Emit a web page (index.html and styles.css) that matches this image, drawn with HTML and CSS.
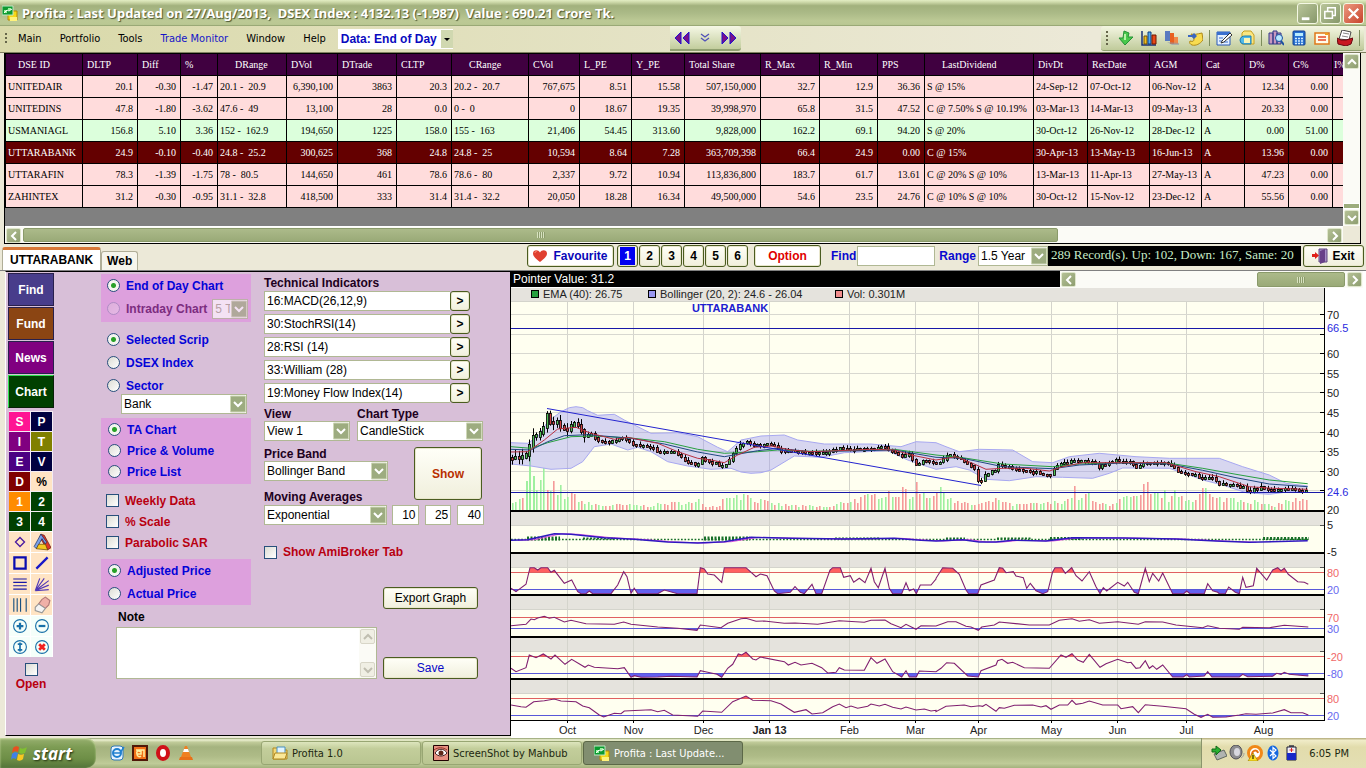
FILE: index.html
```html
<!DOCTYPE html>
<html lang="en">
<head>
<meta charset="utf-8">
<title>Profita</title>
<link rel="stylesheet" href="styles.css">
</head>
<body>
<svg class="defs" aria-hidden="true">
  <symbol id="app" viewBox="0 0 16 16"><path d="M6 6h9v9H6z" fill="#f4d818" stroke="#b88a00"/><path d="M8 12h7v4H8z" fill="#fff27a"/><path d="M0 1h11v9H0z" fill="#0c9a30" stroke="#bfe8c4"/><path d="M2 5h3v3H2zM6 3h3v2H6z" fill="#9bf0a0"/><path d="M2 8l3-3 2 1 3-2" stroke="#fff" fill="none"/></symbol>
  <symbol id="left" viewBox="0 0 10 10"><path d="M7 1 3 5l4 4" fill="none" stroke="currentColor" stroke-width="2"/></symbol>
  <symbol id="right" viewBox="0 0 10 10"><path d="M3 1l4 4-4 4" fill="none" stroke="currentColor" stroke-width="2"/></symbol>
  <symbol id="up" viewBox="0 0 10 10"><path d="M1 7l4-4 4 4" fill="none" stroke="currentColor" stroke-width="2"/></symbol>
  <symbol id="down" viewBox="0 0 10 10"><path d="M1 3l4 4 4-4" fill="none" stroke="currentColor" stroke-width="2"/></symbol>
</svg>

<header class="titlebar">
  <svg class="icon"><use href="#app"/></svg>
  <h1 class="title">Profita : Last Updated on 27/Aug/2013,&nbsp; DSEX Index : 4132.13 (-1.987)&nbsp; Value : 690.21 Crore Tk.</h1>
  <div class="winbtns">
    <button class="winbtn" aria-label="Minimize"><svg viewBox="0 0 20 20"><path d="M4 14h8v3H4z" fill="#fff"/></svg></button>
    <button class="winbtn" aria-label="Restore"><svg viewBox="0 0 20 20"><path d="M7 8V4h8v8h-3M4 8h8v7H4z" fill="none" stroke="#fff" stroke-width="1.6"/></svg></button>
    <button class="winbtn close" aria-label="Close"><svg viewBox="0 0 20 20"><path d="M5 5l10 10M15 5 5 15" stroke="#fff" stroke-width="2.4"/></svg></button>
  </div>
</header>

<div class="menubar">
  <span class="grip"></span>
  <nav class="menu">
    <a href="#">Main</a><a href="#">Portfolio</a><a href="#">Tools</a><a href="#" class="hot">Trade Monitor</a><a href="#">Window</a><a href="#">Help</a>
  </nav>
  <select class="mode" aria-label="Data mode"><option>Data: End of Day</option></select>
  <div class="stepper">
    <button aria-label="First"><svg viewBox="0 0 16 14"><path d="M7 1v12L1 7zM15 1v12L9 7z" fill="#78108a" stroke="#2010d0"/></svg></button>
    <button aria-label="Expand"><svg viewBox="0 0 16 14"><path d="M4 3l4 3 4-3M4 7l4 3 4-3" fill="none" stroke="#5050b8" stroke-width="1.3"/></svg></button>
    <button aria-label="Last"><svg viewBox="0 0 16 14"><path d="M1 1v12l6-6zM9 1v12l6-6z" fill="#78108a" stroke="#2010d0"/></svg></button>
  </div>
  <div class="tools">
    <span class="grip"></span>
    <button aria-label="Download"><svg viewBox="0 0 16 16"><path d="M6 1l5 2-1 4h5l-8 8-6-7h4z" fill="#49c84b" stroke="#249236"/><path d="M7 4v6" stroke="#b4f4a4" stroke-width="2"/></svg></button>
    <button aria-label="Charts"><svg viewBox="0 0 16 16"><path d="M1 1v14h14" stroke="#183078" fill="none" stroke-width="1.5"/><path d="M3 6h3v8H3z" fill="#f0c020" stroke="#755000"/><path d="M7 2h3v12H7z" fill="#50a8f0" stroke="#0b3d80"/><path d="M11 5h4v9h-4z" fill="#e84818" stroke="#701800"/></svg></button>
    <button aria-label="Columns"><svg viewBox="0 0 16 16"><path d="M1 1h5v10H1z" fill="#5a7ac0"/><path d="M6 3h4v11H6z" fill="#e86020"/><path d="M10 7h4v7h-4z" fill="#f08848"/><path d="M3 12l5 3h7v-2z" fill="#9098a8" opacity=".6"/></svg></button>
    <button aria-label="Note"><svg viewBox="0 0 16 16"><path d="M4 4c3 1 6 0 11-1l1 7c-3 4-7 6-11 5-2-1-3-2-2-4 3 1 4 0 4-2z" fill="#f8dc50" stroke="#b08a18"/><path d="M1 5h4l2-2 3 3-3 3-2-2H1z" fill="#3a66c0"/></svg></button>
    <span class="sep"></span>
    <button aria-label="Edit"><svg viewBox="0 0 16 16"><path d="M1 2h13v13H1z" fill="#e4f0ff" stroke="#2858b8"/><path d="M1 2h13v3H1z" fill="#3a70d0"/><path d="M3 8h4M3 11h3M8 12h4" stroke="#3a70d0"/><path d="M6 11l8-8 2 2-8 7-3 1z" fill="#fff" stroke="#303030"/></svg></button>
    <button aria-label="Copy"><svg viewBox="0 0 16 16"><path d="M5 1h7l3 4v9H3V3z" fill="#fbe680" stroke="#c8a020"/><path d="M1 10a5 5 0 0 1 5-4h6v8H4a4 4 0 0 1-3-4z" fill="#50b8e8" stroke="#1b7cb0"/><path d="M5 8h6v5H5z" fill="#f8f4b8"/></svg></button>
    <span class="sep"></span>
    <button aria-label="Search"><svg viewBox="0 0 16 16"><path d="M1 3h4v11H1zM5 1h4v13H5zM9 3h4v11H9z" fill="#c898c0" stroke="#303888"/><circle cx="11" cy="8" r="3.5" fill="#b8e8ff" stroke="#1c50a0"/><path d="M13 11l3 4" stroke="#1c50a0" stroke-width="2"/></svg></button>
    <button aria-label="Calculator"><svg viewBox="0 0 16 16"><rect x="2" y="1" width="12" height="14" rx="1" fill="#2770d0" stroke="#124090"/><path d="M4 3h8v3H4z" fill="#b8ecff"/><path d="M4 8.500h8M4 11h8M4 13.500h8" stroke="#d0ecff" stroke-width="1.500" stroke-dasharray="2 1"/></svg></button>
    <button aria-label="Mail"><svg viewBox="0 0 16 16"><path d="M1 3h14v11H1z" fill="#fffce8" stroke="#e07818" stroke-width="1.500"/><path d="M4 7h8M4 10h8" stroke="#e84828" stroke-width="1.500"/><path d="M11 3h3v2h-3z" fill="#f0a020"/></svg></button>
    <button aria-label="Archive"><svg viewBox="0 0 16 16"><path d="M5 0l9 2-2 8-10-1z" fill="#fff" stroke="#484848"/><path d="M6 3l6 1M5 6l6 1" stroke="#888"/><path d="M0 8l4 2h5l7-2-2 6-5 2-8-2z" fill="#c81820" stroke="#680810"/></svg></button>
    <span class="sep"></span>
  </div>
</div>

<section class="gridwrap">
  <div class="gridview">
    <table class="quotes">
      <colgroup id="cols"></colgroup>
      <thead><tr id="head"></tr></thead>
      <tbody id="rows"></tbody>
    </table>
  </div>
  <div class="vscroll">
    <button class="sb" aria-label="Scroll up"><svg><use href="#up"/></svg></button>
    <span class="vthumb"></span>
    <button class="sb" aria-label="Scroll down"><svg><use href="#down"/></svg></button>
  </div>
  <div class="hscroll gridscroll">
    <button class="sb" aria-label="Scroll left"><svg><use href="#left"/></svg></button>
    <span class="thumb wide"></span><span class="track"></span>
    <button class="sb" aria-label="Scroll right"><svg><use href="#right"/></svg></button>
  </div>
</section>

<div class="midbar">
  <div class="tabs"><button class="tab on">UTTARABANK</button><button class="tab">Web</button></div>
  <button class="btn fav"><svg viewBox="0 0 14 12"><path d="M7 12C2 8 0 6 0 3.500 0 0 5-1 7 2.500 9-1 14 0 14 3.500 14 6 12 8 7 12z" fill="#e04030"/><path d="M2 3c0-1 1-2 2-2" stroke="#ff9a80" fill="none"/></svg>Favourite</button>
  <div class="pages"><button class="btn cur"><span>1</span></button><button class="btn">2</button><button class="btn">3</button><button class="btn">4</button><button class="btn">5</button><button class="btn">6</button></div>
  <button class="btn option">Option</button>
  <label class="blue" for="find">Find</label><input id="find" class="box find">
  <label class="blue" for="range">Range</label><select id="range" class="box range"><option>1.5 Year</option></select>
  <output class="records">289 Record(s). Up: 102, Down: 167, Same: 20</output>
  <button class="btn exit"><svg viewBox="0 0 16 16"><path d="M7 1h8v13H7z" fill="#a890c8" stroke="#604880"/><path d="M8 3l5-2v13l-5 2z" fill="#684088"/><path d="M0 6h3V4l4 3.500L3 11V9H0z" fill="#e02018"/></svg>Exit</button>
</div>

<main class="work">
  <section class="panel">
    <aside class="side">
      <button class="nav find-b">Find</button><button class="nav fund-b">Fund</button><button class="nav news-b">News</button><button class="nav chart-b">Chart</button>
      <div class="keys">
        <button class="k pink">S</button><button class="k navy">P</button>
        <button class="k purple">I</button><button class="k olive">T</button>
        <button class="k indigo">E</button><button class="k navy">V</button>
        <button class="k maroon">D</button><button class="k bisque">%</button>
        <button class="k orange">1</button><button class="k green">2</button>
        <button class="k green">3</button><button class="k green">4</button>
      </div>
      <div class="draw">
        <button aria-label="Diamond"><svg viewBox="0 0 16 16"><path d="M8 4l4 4-4 4-4-4z" fill="none" stroke="#4a1ca0" stroke-width="1.200"/></svg></button>
        <button aria-label="Prism"><svg viewBox="0 0 16 16"><path d="M7 1l3 1 6 11-3 2-7-11z" fill="#e03828" stroke="#501010" stroke-width=".6"/><path d="M7 1L1 12l2 2 5-9 3 5 1-2z" fill="#7aa0e8" stroke="#102860" stroke-width=".6"/><path d="M3 14l2-4h6l2 5z" fill="#f4c820" stroke="#604000" stroke-width=".6"/></svg></button>
        <button aria-label="Rectangle"><svg viewBox="0 0 16 16"><path d="M3 3h10v10H3z" fill="none" stroke="#0a0ab0" stroke-width="2"/></svg></button>
        <button aria-label="Line"><svg viewBox="0 0 16 16"><path d="M3 13L13 3" stroke="#1818c8" stroke-width="2"/></svg></button>
        <button aria-label="Levels"><svg viewBox="0 0 16 16"><path d="M2 3.500h12M2 6.500h12M2 9.500h12M2 12.500h12" stroke="#1818a8"/></svg></button>
        <button aria-label="Fan"><svg viewBox="0 0 16 16"><path d="M2 14L6 3M2 14l8-11M2 14L14 5M2 14l12-5M2 14l12-1" stroke="#5038b8"/></svg></button>
        <button aria-label="Cycles"><svg viewBox="0 0 16 16"><path d="M2.500 2v12M5.500 2v12M8.500 2v12M13.500 2v12" stroke="#185080"/></svg></button>
        <button aria-label="Eraser"><svg viewBox="0 0 16 16"><path d="M8 3l3-2 4 3-1 4-3 3-6-4z" fill="#f0b0a8" stroke="#b07878"/><path d="M5 7l6 4-3 4-6-2 0-3z" fill="#f4f4f4" stroke="#989898"/></svg></button>
      </div>
      <div class="zoom">
        <button aria-label="Zoom in"><svg viewBox="0 0 16 16"><circle cx="8" cy="8" r="5.700"/><path d="M5 8h6M8 5v6" stroke-width="2"/></svg></button>
        <button aria-label="Zoom out"><svg viewBox="0 0 16 16"><circle cx="8" cy="8" r="5.700"/><path d="M5 8h6" stroke-width="2"/></svg></button>
        <button aria-label="Fit height"><svg viewBox="0 0 16 16"><circle cx="8" cy="8" r="5.700"/><path d="M8 4v8M6 5.500h4M6 10.500h4" stroke-width="1.500"/></svg></button>
        <button aria-label="Reset"><svg viewBox="0 0 16 16"><circle cx="8" cy="8" r="5.700"/><path d="M5.500 5.500l5 5M10.500 5.500l-5 5" stroke="#f02020" stroke-width="2.400"/></svg></button>
      </div>
      <label class="open"><input type="checkbox">Open</label>
    </aside>

    <form class="form" onsubmit="return false">
      <div class="opts">
        <div class="group g1">
          <label class="opt"><input type="radio" name="feed" checked>End of Day Chart</label>
          <div class="line"><label class="opt off"><input type="radio" name="feed" disabled>Intraday Chart</label><select class="box mini" aria-label="Ticks" disabled><option>5 T</option></select></div>
        </div>
        <div class="group g2">
          <label class="opt"><input type="radio" name="src" checked>Selected Scrip</label>
          <label class="opt"><input type="radio" name="src">DSEX Index</label>
          <label class="opt"><input type="radio" name="src">Sector</label>
        </div>
        <select class="box bank" aria-label="Sector"><option>Bank</option></select>
        <div class="group g3">
          <label class="opt"><input type="radio" name="view" checked>TA Chart</label>
          <label class="opt"><input type="radio" name="view">Price &amp; Volume</label>
          <label class="opt"><input type="radio" name="view">Price List</label>
        </div>
        <div class="checks">
          <label class="opt red"><input type="checkbox">Weekly Data</label>
          <label class="opt red"><input type="checkbox">% Scale</label>
          <label class="opt red"><input type="checkbox">Parabolic SAR</label>
        </div>
        <div class="group g4">
          <label class="opt"><input type="radio" name="adj" checked>Adjusted Price</label>
          <label class="opt"><input type="radio" name="adj">Actual Price</label>
        </div>
      </div>
      <div class="ind">
        <h2 class="cap">Technical Indicators</h2>
        <div class="pick"><input class="box" aria-label="Indicator 1" value="16:MACD(26,12,9)"><button class="btn">&gt;</button></div>
        <div class="pick"><input class="box" aria-label="Indicator 2" value="30:StochRSI(14)"><button class="btn">&gt;</button></div>
        <div class="pick"><input class="box" aria-label="Indicator 3" value="28:RSI (14)"><button class="btn">&gt;</button></div>
        <div class="pick"><input class="box" aria-label="Indicator 4" value="33:William (28)"><button class="btn">&gt;</button></div>
        <div class="pick"><input class="box" aria-label="Indicator 5" value="19:Money Flow Index(14)"><button class="btn">&gt;</button></div>
        <div class="pair">
          <label class="field vw"><span class="cap">View</span><select class="box"><option>View 1</option></select></label>
          <label class="field ct"><span class="cap">Chart Type</span><select class="box"><option>CandleStick</option></select></label>
        </div>
        <div class="bands">
          <div class="stack">
            <label class="field"><span class="cap">Price Band</span><select class="box"><option>Bollinger Band</option></select></label>
            <label class="cap" for="ma">Moving Averages</label>
          </div>
          <button class="btn show">Show</button>
        </div>
        <div class="mas"><select id="ma" class="box"><option>Exponential</option></select><input class="box num" aria-label="Period 1" value="10"><input class="box num" aria-label="Period 2" value="25"><input class="box num" aria-label="Period 3" value="40"></div>
        <label class="opt red ami"><input type="checkbox">Show AmiBroker Tab</label>
        <button class="btn act export">Export Graph</button>
      </div>
      <div class="note">
        <div class="notebox">
          <label for="note">Note</label>
          <div class="area"><textarea id="note"></textarea><div class="vscroll off"><button class="sb" aria-label="Up"><svg><use href="#up"/></svg></button><button class="sb" aria-label="Down"><svg><use href="#down"/></svg></button></div></div>
        </div>
        <button class="btn act save">Save</button>
      </div>
    </form>
  </section>

  <section class="chart">
    <div class="pointer">
      <span class="pv">Pointer Value: 31.2</span>
      <div class="hscroll">
        <button class="sb" aria-label="Earlier"><svg><use href="#left"/></svg></button>
        <span class="track"></span><span class="thumb"></span>
        <button class="sb" aria-label="Later"><svg><use href="#right"/></svg></button>
      </div>
    </div>
    <svg id="plot" class="plot" viewBox="511 288 855 450" preserveAspectRatio="xMinYMin meet" role="img" aria-label="UTTARABANK price chart"></svg>
  </section>
</main>

<footer class="taskbar">
  <button class="start"><svg viewBox="0 0 18 18"><path d="M2 4c2-2 4-2 6-1L7 8C5 7 3 7 1 9z" fill="#e85020"/><path d="M9 4c2 1 4 1 7-1l-2 6c-2 1-4 1-6 0z" fill="#80c030"/><path d="M1 10c2-2 4-2 6-1l-2 6c-2-1-4-1-5 1z" fill="#4080e8"/><path d="M7 10c2 1 4 1 6 0l-1 5c-2 2-4 2-6 1z" fill="#f8c820"/></svg>start</button>
  <div class="quick">
    <a href="#" aria-label="Browser"><svg viewBox="0 0 16 16"><rect x="2" y="1" width="12" height="14" rx="3" fill="#e8f4ff" stroke="#3078b8"/><circle cx="8" cy="8" r="4" fill="none" stroke="#2080d0" stroke-width="2"/><path d="M5 8h6l4-6" stroke="#2080d0" fill="none" stroke-width="1.500"/></svg></a>
    <a href="#" aria-label="Keyboard"><svg viewBox="0 0 16 16"><path d="M1 1h14v14H1z" fill="#f07018" stroke="#501808" stroke-width="2"/><path d="M4 5h8v7M9 5v4H5c-1-3 2-4 3-2M5 9c0 3 3 3 4 2" stroke="#fff0a0" stroke-width="1.500" fill="none"/></svg></a>
    <a href="#" aria-label="Opera"><svg viewBox="0 0 16 16"><ellipse cx="8" cy="8" rx="5" ry="6" fill="#fff" stroke="#d01018" stroke-width="4"/></svg></a>
    <a href="#" aria-label="Player"><svg viewBox="0 0 16 16"><path d="M7 1h2l4 11H3z" fill="#f08020"/><path d="M6 4h4l1 3H5z" fill="#fff"/><path d="M2 12h12l1 3H1z" fill="#e87018"/></svg></a>
  </div>
  <div class="tasks">
    <button class="task"><svg viewBox="0 0 16 16"><path d="M1 3h5l2 2h7v9H1z" fill="#f4d878" stroke="#b08820"/><path d="M5 2h8v9H5z" fill="#e0f4ff" stroke="#4890c0"/><path d="M3 8h12l-2 6H1z" fill="#fae898" stroke="#b08820"/></svg>Profita 1.0</button>
    <button class="task"><svg viewBox="0 0 16 16"><path d="M.500.500h15v15H.500z" fill="#e89080" stroke="#200000"/><path d="M2 8c3-5 9-5 12 0-3 4-9 4-12 0z" fill="#fff" stroke="#402020"/><circle cx="8" cy="8" r="2.500" fill="#602818"/><path d="M1 5c4-3 9-3 13 0" stroke="#903028" fill="none"/></svg>ScreenShot by Mahbub</button>
    <button class="task on"><svg><use href="#app"/></svg>Profita : Last Update...</button>
  </div>
  <div class="tray">
    <svg viewBox="0 0 16 16"><path d="M3 9l10-4 3 6-10 4z" fill="#b0b4b0" stroke="#606860"/><path d="M1 4h4V1l5 4-5 5V7H1z" fill="#28b030" stroke="#106818"/></svg>
    <svg viewBox="0 0 16 16"><ellipse cx="7" cy="7" rx="6" ry="7" fill="#8c8c90" stroke="#505058"/><ellipse cx="8" cy="7" rx="3" ry="4" fill="#d8d8e0"/><path d="M12 13c2-1 3-3 3-5" stroke="#a0a0a0" fill="none"/></svg>
    <svg viewBox="0 0 16 16"><circle cx="8" cy="8" r="6.500" fill="#fff" stroke="#f08818" stroke-width="3"/><path d="M5 10c0-5 5-6 6-2" stroke="#e87010" stroke-width="2" fill="none"/><path d="M6 8l5 8H1z" fill="#fce020" stroke="#806000" stroke-width=".5"/><path d="M6 10v4" stroke="#000"/></svg>
    <svg viewBox="0 0 16 16"><ellipse cx="8" cy="8" rx="5.500" ry="7.500" fill="#1468e0"/><path d="M5 5l6 6-3 2.500v-11L11 5l-6 6" stroke="#fff" fill="none" stroke-width="1.200"/></svg>
    <svg viewBox="0 0 16 16"><path d="M6 0h5v2H6z" fill="#606060"/><path d="M4 2h9v13H4z" fill="#f0f0f8" stroke="#181830"/><path d="M4 8h9v7H4z" fill="#1828c8"/><path d="M8.500 3v4M6.500 5h4" stroke="#e02020"/></svg>
    <time class="clock">6:05 PM</time>
  </div>
</footer>
<script src="app.js"></script>
</body>
</html>
```

FILE: styles.css
```css
* { box-sizing: border-box; }
body {
  margin: 0; min-height: 100vh; display: flex; flex-direction: column;
  background: #ece9d8; color: #000; overflow-x: hidden;
  font: 12px "Liberation Sans", Arial, sans-serif;
}
button, input, select, textarea { font: inherit; color: inherit; margin: 0; }
button { padding: 0; border: 0; background: none; }
.defs { display: none; }
svg { display: block; flex: none; }
h1, h2 { margin: 0; }

/* title bar */
.titlebar {
  display: flex; align-items: center; gap: 4px; height: 26px; padding: 0 2px;
  background: linear-gradient(#e2edc3 0, #cfdaab 8%, #a2b17d 22%, #abba87 50%, #bcc995 80%, #bac893 94%, #8b9a69);
}
.icon { width: 16px; height: 16px; }
.title { font: bold 13px "Noto Sans", sans-serif; color: #fff; text-shadow: 1px 1px 1px #4a5530; white-space: pre; }
.winbtns { display: flex; gap: 2px; margin-left: auto; }
.winbtn { width: 21px; height: 21px; border: 1px solid #f4f8e4; border-radius: 3px; background: linear-gradient(135deg, #b9c59a, #87986a); }
.winbtn.close { background: linear-gradient(135deg, #ec9a80, #c8432c); }

/* menu bar */
.menubar { display: flex; align-items: center; height: 27px; padding: 0 2px 1px 5px; background: linear-gradient(90deg, #d9d9a9, #ece9d8 80%); border-bottom: 1px solid #808060; }
.grip { width: 2px; height: 12px; background: repeating-linear-gradient(#66664a 0 2px, transparent 2px 4px); }
.menu { display: flex; gap: 18px; padding: 0 12px 0 11px; font: 11px "DejaVu Sans Condensed", "Liberation Sans", sans-serif; }
.menu a { color: #000; text-decoration: none; white-space: nowrap; }
.menu .hot { color: #1414c8; }
.mode {
  appearance: none; width: 115px; height: 20px; border: 0; padding: 0 0 0 3px; font-weight: bold; color: #0a0ac0;
  background: url("data:image/svg+xml,%3Csvg xmlns='http://www.w3.org/2000/svg' width='12' height='20'%3E%3Cpath fill='%23d0d8b0' d='M0 1h12v18H0z'/%3E%3Cpath d='M3 9h6L6 12z'/%3E%3C/svg%3E") right / 12px 20px no-repeat #fff;
}
.stepper { display: flex; align-items: center; justify-content: space-around; width: 71px; height: 25px; margin-left: 217px; background: linear-gradient(#f6f8e6, #c2cd9d); border-bottom: 2px solid #90a070; border-radius: 0 3px 3px 0; }
.stepper svg { width: 16px; height: 14px; }
.tools { display: flex; align-items: center; gap: 7px; height: 25px; margin-left: auto; padding: 0 5px; background: linear-gradient(#f4f6e2, #c0cb9b); border-bottom: 1px solid #90a070; border-radius: 3px; }
.tools svg { width: 16px; height: 16px; }
.tools .grip { margin-right: 3px; height: 14px; }
.sep { width: 1px; height: 16px; margin: 0 -1px; background: #7c8c5c; }

/* quotes grid */
.gridwrap { display: grid; grid-template-columns: minmax(0, 1fr) 17px; grid-template-rows: 173px 17px; margin: 0 5px 0 4px; border: 1px solid #000; border-top: 0; background: #ece9d8; }
.gridview { overflow: hidden; background: #808080; }
.quotes { table-layout: fixed; width: 1377px; border-collapse: collapse; font: 10px "Liberation Serif", serif; }
.quotes th, .quotes td { height: 22px; padding: 0 4px; border: 1px solid #000; white-space: nowrap; overflow: hidden; text-align: right; }
.quotes th { background: #400040; color: #fff; font-weight: normal; text-align: left; padding: 0 4px; }
.quotes th:last-child { padding: 0 1px; }
.quotes th.in { padding-left: 17px; }
.quotes th:first-child { padding-left: 12px; }
.quotes td { background: #ffdcdc; color: #000; }
.quotes .l { text-align: left; padding: 0 2px; }
.quotes .up td { background: #dcffdc; }
.quotes .sel td { background: #640000; color: #fff; }
.vscroll { display: flex; flex-direction: column; justify-content: space-between; background: #fbfbf6; }
.vthumb { height: 6px; margin-top: auto; background: #9cac7c; border: 1px solid #fff; }
.hscroll { display: flex; background: #fbfbf6; height: 17px; }
.gridscroll { border-top: 1px solid #fff; }
.sb { width: 15px; height: 15px; margin: 1px; flex: none; display: grid; place-items: center; color: #fff; background: linear-gradient(135deg, #b4c095, #8e9e70); border: 1px solid #dfe6cc; border-radius: 2px; }
.sb svg { width: 10px; height: 10px; }
.track { flex: 1; }
.thumb { width: 88px; margin: 1px; border: 1px solid #8a9a6a; border-radius: 2px; background: repeating-linear-gradient(90deg, #d8e2c0 0 1px, #8c9c6c 1px 2px) center / 8px 6px no-repeat, linear-gradient(#acba8a, #9aaa78); }
.thumb.wide { width: 1035px; flex: 0 1 1035px; }

/* tab and action bar */
.midbar { display: flex; align-items: center; height: 27px; padding: 0 2px 2px; border-bottom: 1px solid #808080; }
.tabs { display: flex; align-items: flex-end; align-self: stretch; margin-right: auto; padding-top: 3px; margin-bottom: -2px; }
.tab { height: 19px; padding: 0 5px; border: 1px solid #b0ae98; border-bottom: 0; border-radius: 3px 3px 0 0; background: #f6f5ec; font-weight: bold; }
.tab.on { height: 23px; padding: 0 7px; background: #fff; border-top: 3px solid #d87838; }
.btn { border: 1px solid #4a5c20; border-radius: 3px; background: linear-gradient(#fffff8, #f0efdc); display: flex; align-items: center; justify-content: center; height: 22px; font-weight: bold; box-shadow: inset 0 0 0 1px #e8e6cc; }
.fav { width: 87px; gap: 6px; color: #0808b8; background: #fff; }
.fav svg { width: 14px; height: 12px; }
.pages { display: flex; gap: 1px; margin: 0 6px 0 3px; }
.pages .btn { width: 21px; }
.pages span { background: #0000f0; color: #fff; padding: 2px 4px; }
.option { width: 67px; color: #e00000; background: #fff; margin-right: 10px; }
.blue { font-weight: bold; color: #0808d0; }
.box { appearance: none; height: 20px; border: 1px solid #b0b894; border-radius: 0; background: #fff; padding: 0 2px; min-width: 0; outline: 0; }
select.box {
  padding-right: 17px; text-overflow: clip;
  background: url("data:image/svg+xml,%3Csvg xmlns='http://www.w3.org/2000/svg' width='16' height='18'%3E%3Cpath fill='%239dac80' stroke='%23cfd8b8' d='M.5 1h15v16H.5z'/%3E%3Cpath d='M4 7l4 4 4-4' fill='none' stroke='%23fff' stroke-width='2'/%3E%3C/svg%3E") right center no-repeat #fff;
}
.find { width: 78px; margin: 0 4px 0 1px; }
.range { width: 70px; margin-left: 2px; }
.records { flex: 0 1 253px; height: 20px; padding: 1px 3px; background: #000; color: #c8ecc8; font: 13px "Liberation Serif", serif; white-space: nowrap; overflow: hidden; }
.exit { width: 61px; gap: 4px; margin-left: 2px; }
.exit svg { width: 16px; height: 16px; }

/* work area */
.work { flex: 1; display: flex; }
.panel { flex: none; display: flex; margin-left: 5px; padding: 1px 26px 0 2px; border: 1px solid #000; border-left-color: #fff; background: #d8bfd8; margin-bottom: 2px; }
.side { width: 46px; margin-right: 47px; }
.nav { display: block; width: 46px; height: 33px; margin-bottom: 1px; color: #fff; font-weight: bold; border: 1px solid #28204c; }
.find-b { background: #483d8b; }
.fund-b { background: #8b4513; }
.news-b { background: #800080; }
.chart-b { background: #004000; border-color: #30e050 #082008 #082008 #30e050; }
.keys { display: grid; grid-template-columns: 21px 21px; gap: 1px; margin: 3px 1px 0; padding-top: 1px; background: #f4ecf4; }
.k { height: 19px; color: #fff; font-weight: bold; }
.pink { background: #ff1493; } .navy { background: #000040; } .purple { background: #800080; }
.olive { background: #808000; } .indigo { background: #4b0082; } .maroon { background: #800000; }
.bisque { background: #ffe4c4; color: #000; } .orange { background: #ff8c00; } .green { background: #004000; }
.draw, .zoom { display: grid; grid-template-columns: 21px 21px; gap: 1px; margin: 0 1px; padding-top: 1px; background: #fff; }
.draw button { height: 20px; background: #ffe4c4; display: grid; place-items: center; }
.zoom button { height: 20px; background: #f5fffa; display: grid; place-items: center; }
.draw svg, .zoom svg { width: 18px; height: 18px; }
.zoom svg { fill: none; stroke: #1870a8; }
.open { display: flex; flex-direction: column; align-items: center; gap: 1px; padding-top: 6px; font-weight: bold; color: #b80010; }

.form { display: grid; grid-template-columns: 150px 220px; column-gap: 13px; align-content: start; }
.group { padding-left: 6px; background: #dda0dd; }
.opt { display: flex; align-items: center; gap: 6px; height: 22px; font-weight: bold; color: #0404d8; white-space: nowrap; }
.opt.red { color: #b80010; }
.off { color: #7c2c80; }
.off input { opacity: .25; }
input[type=radio], input[type=checkbox] { appearance: none; width: 13px; height: 13px; border: 1px solid #28507c; background: linear-gradient(135deg, #dcdcd4, #fff); flex: none; }
input[type=radio] { border-radius: 50%; }
input[type=radio]:checked { background: radial-gradient(circle, #28a028 0 2px, #f4f4f0 3px); }
.line { display: flex; align-items: center; gap: 5px; }
.g1 { padding-bottom: 2px; margin-top: 1px; }
.g1 .opt { height: 23px; }
.mini { width: 36px; color: #a8a090; opacity: .7; }
.g2 { background: none; padding-top: 6px; }
.g2 .opt { height: 23px; }
.bank { display: block; width: 126px; margin: -3px 0 4px 20px; }
.g3 .opt { height: 21px; }
.g3 { padding: 1px 0 2px 7px; }
.checks { padding: 6px 0 6px 5px; }
.checks .opt { height: 21px; }
.g4 { padding-left: 7px; }
.g4 .opt { height: 23px; }

.cap { display: block; font: bold 12px/14px "Liberation Sans", Arial, sans-serif; color: #200020; }
.ind { padding-top: 3px; }
.pick { display: flex; margin-bottom: 3px; }
.pick:first-of-type { margin-top: 1px; }
.pick .box { width: 186px; border-right: 0; }
.pick .btn { width: 20px; height: 20px; }
.pair { display: flex; justify-content: space-between; padding: 1px 1px 0 0; }
.field .box { display: block; width: 100%; }
.vw { width: 86px; }
.ct { width: 126px; }
.bands { display: flex; justify-content: space-between; align-items: flex-start; margin-top: 6px; padding-right: 2px; }
.stack { width: 124px; }
.stack > .cap { margin-top: 9px; }
.show { width: 68px; height: 53px; color: #b83000; }
.mas { display: flex; gap: 6px; margin-top: 1px; }
.mas select { width: 124px; margin-right: -1px; }
.num { width: 27px; text-align: right; }
.ami { margin-top: 16px; }
.act { width: 95px; font-weight: normal; }
.export { margin: 24px 0 0 119px; }
.save { color: #0808c8; }
.note { grid-column: 1 / -1; display: flex; align-items: flex-end; gap: 6px; padding-left: 15px; }
.notebox { width: 261px; font-weight: bold; }
.notebox label { display: block; padding: 1px 2px 3px; }
.area { display: flex; height: 52px; border: 1px solid #b0b894; background: #fff; }
textarea { flex: 1; border: 0; resize: none; outline: 0; background: none; min-width: 0; font-weight: normal; }
.vscroll.off { width: 17px; }
.off .sb { background: #f0efe4; color: #c0beb0; border-color: #d8d6c8; }

/* chart */
.chart { flex: 1; min-width: 0; background: #fff; }
.pointer { display: flex; height: 17px; background: #fff; }
.pv { flex: 1; height: 16px; background: #000; color: #fff; padding: 1px 2px; }
.pointer .hscroll { width: 303px; flex: none; margin-right: 3px; }
.plot { width: 100%; height: auto; }
.plot text { font: 11px "Liberation Sans", Arial, sans-serif; }
.plot .strong { font-weight: bold; }
.plot .mid { text-anchor: middle; }

/* taskbar */
.taskbar { display: flex; align-items: stretch; height: 30px; background: linear-gradient(#8b9a68 0, #eef2d4 6%, #c0cb99 14%, #a5b37f 30%, #aebb87 60%, #bfcb98 85%, #a4b27e); color: #202810; font: 11px "DejaVu Sans Condensed", "Liberation Sans", sans-serif; }
.start { width: 96px; display: flex; align-items: center; gap: 4px; padding-left: 11px; color: #fff; font: italic bold 17px "Open Sans", sans-serif; text-shadow: 1px 1px 2px #203010; border-radius: 0 10px 10px 0; background: linear-gradient(#98b070, #7d9c54 30%, #6d8e46 70%, #54743a); box-shadow: inset 0 1px 2px #d0e0a8; }
.start svg { width: 18px; height: 18px; }
.quick { display: flex; align-items: center; gap: 7px; padding: 0 0 0 13px; }
.quick svg, .tray svg { width: 16px; height: 16px; }
.tasks { display: flex; align-items: center; gap: 1px; margin-left: 67px; flex: 1; min-width: 0; }
.task { flex: 0 1 160px; height: 24px; display: flex; align-items: center; gap: 4px; padding-left: 10px; border: 1px solid #98a673; border-radius: 3px; background: linear-gradient(#dde5bd, #c3ce9b 30%, #b9c591); white-space: nowrap; overflow: hidden; }
.task svg { width: 16px; height: 16px; }
.task.on { background: #818e70; color: #fff; border-color: #5c6848; }
.tray { display: flex; align-items: center; gap: 2px; padding: 0 17px 0 9px; background: linear-gradient(#b0a878, #f0ecc8 8%, #e2dcac 30%, #e4dfb4); border-left: 1px solid #8a946c; }
.clock { margin-left: 8px; }
```

FILE: app.js
```js
const widths = [77,55,43,37,69,51,59,55,77,51,52,53,76,59,58,47,109,54,62,52,43,44,44,50];
const heads = ["DSE ID","DLTP","Diff","%","DRange","DVol","DTrade","CLTP","CRange","CVol","L_PE","Y_PE","Total Share","R_Max","R_Min","PPS","LastDividend","DivDt","RecDate","AGM","Cat","D%","G%","I%"];
const indented = [0, 4, 8, 16];
const leftCols = [0, 4, 8, 16, 17, 18, 19, 20];
const quotes = [
  ["", "UNITEDAIR|20.1|-0.30|-1.47|20.1 -  20.9|6,390,100|3863|20.3|20.2 -  20.7|767,675|8.51|15.58|507,150,000|32.7|12.9|36.36|S @ 15%|24-Sep-12|07-Oct-12|06-Nov-12|A|12.34|0.00|"],
  ["", "UNITEDINS|47.8|-1.80|-3.62|47.6 -  49|13,100|28|0.0|0 -  0|0|18.67|19.35|39,998,970|65.8|31.5|47.52|C @ 7.50% S @ 10.19%|03-Mar-13|14-Mar-13|09-May-13|A|20.33|0.00|"],
  ["up", "USMANIAGL|156.8|5.10|3.36|152 -  162.9|194,650|1225|158.0|155 -  163|21,406|54.45|313.60|9,828,000|162.2|69.1|94.20|S @ 20%|30-Oct-12|26-Nov-12|28-Dec-12|A|0.00|51.00|"],
  ["sel", "UTTARABANK|24.9|-0.10|-0.40|24.8 -  25.2|300,625|368|24.8|24.8 -  25|10,594|8.64|7.28|363,709,398|66.4|24.9|0.00|C @ 15%|30-Apr-13|13-May-13|16-Jun-13|A|13.96|0.00|"],
  ["", "UTTARAFIN|78.3|-1.39|-1.75|78 -  80.5|144,650|461|78.6|78.6 -  80|2,337|9.72|10.94|113,836,800|183.7|61.7|13.61|C @ 20% S @ 10%|13-Mar-13|11-Apr-13|27-May-13|A|47.23|0.00|"],
  ["", "ZAHINTEX|31.2|-0.30|-0.95|31.1 -  32.8|418,500|333|31.4|31.4 -  32.2|20,050|18.28|16.34|49,500,000|54.6|23.5|24.76|C @ 10% S @ 10%|30-Oct-12|15-Nov-12|23-Dec-12|A|55.56|0.00|"]
];
document.getElementById("cols").innerHTML = widths.map(w => `<col style="width:${w}px">`).join("");
document.getElementById("head").innerHTML = heads.map((h, i) => `<th class="${indented.includes(i) ? "in" : ""}">${h}</th>`).join("");
document.getElementById("rows").innerHTML = quotes.map(([cls, row]) =>
  `<tr class="${cls}">` + row.split("|").map((v, i) => `<td class="${leftCols.includes(i) ? "l" : ""}">${v.replace(/  /g, " &nbsp;")}</td>`).join("") + "</tr>").join("");

/* Series are stored in thirds of a pixel, in two halves that start at x 511 and x 936. */
function series(top, a, b) {
  const half = (s, x0) => s.trim().split(" ").map(p => {
    const [x, y] = p.split(",").map(Number);
    return [x0 + x / 3, top + y / 3];
  });
  return half(a, 511).concat(b ? half(b, 936) : []);
}
const pts = s => s.map(p => p[0].toFixed(1) + "," + p[1].toFixed(1)).join(" ");
const line = (s, color, w = 1) => `<polyline points="${pts(s)}" fill="none" stroke="${color}" stroke-width="${w}"/>`;
const seg = (x1, y1, x2, y2, c, w = 1) => `<path d="M${x1} ${y1}L${x2} ${y2}" stroke="${c}" stroke-width="${w}"/>`;
const rect = (x, y, w, h, f) => `<rect x="${x}" y="${y}" width="${w}" height="${h}" fill="${f}"/>`;
const text = (x, y, t, c = "#222", cls = "") => `<text x="${x}" y="${y}" fill="${c}" class="${cls}">${t}</text>`;
function at(s, x) {
  for (let i = 1; i < s.length; i++)
    if (x <= s[i][0]) {
      const [a, b] = [s[i - 1], s[i]];
      return a[1] + (b[1] - a[1]) * (x - a[0]) / (b[0] - a[0] || 1);
    }
  return s[s.length - 1][1];
}
let seed = 7;
const rnd = () => (seed = (seed * 16807) % 2147483647) / 2147483647;

const months = [[567.5,"Oct"],[633.5,"Nov"],[703.5,"Dec"],[769.5,"Jan 13"],[849.5,"Feb"],[915.5,"Mar"],[978.5,"Apr"],[1051.5,"May"],[1117.5,"Jun"],[1186.5,"Jul"],[1263.5,"Aug"]];
let g = rect(511, 288, 813, 432, "#fffff0");
[[288,13],[512,13],[554,13],[596,13],[638,13],[680,13]].forEach(([y, h]) => { g += rect(511, y, 813, h, "#e5e3dd") + seg(511, y + h + .5, 1324, y + h + .5, "#d4d4cc"); });
months.forEach(([x]) => { g += seg(x, 302, x, 720, "#d4d4cc"); });
const prices = [[314.5,"70"],[334.5,""],[353.5,"60"],[373.5,"55"],[392.5,"50"],[412.5,"45"],[432.5,"40"],[451.5,"35"],[471.5,"30"],[490.5,""]];
prices.forEach(([y, t]) => {
  g += seg(511, y, 1324, y, "#d8d8d0") + seg(1320, y, 1324, y, "#000");
  if (t) g += text(1327, y + 4, t);
});

/* volume */
const vol = [[511,13],[522,14],[526,34],[528,68],[532,64],[535,20],[540,36],[543,44],[547,26],[551,22],[554,35],[557,22],[560,27],[564,19],[575,18],[583,9],[600,6],[650,6],[683,10],[686,12],[692,7],[699,13],[705,5],[718,5],[724,19],[735,20],[745,18],[755,14],[770,8],[800,5],[830,4],[842,10],[870,17],[885,24],[900,20],[904,27],[909,16],[915,32],[925,20],[945,24],[955,10],[975,7],[990,10],[998,14],[1010,6],[1050,9],[1069,14],[1073,26],[1080,14],[1088,20],[1095,8],[1110,8],[1120,14],[1141,16],[1145,41],[1149,18],[1163,22],[1170,13],[1176,24],[1190,12],[1204,28],[1213,13],[1233,16],[1250,12],[1270,5],[1290,13],[1308,11]];
const price = series(240,
  "0,650 20,650 45,642 57,605 68,578 80,582 90,570 98,550 108,520 120,550 135,535 150,560 165,570 180,552 195,545 210,570 222,590 240,580 260,598 300,606 335,588 360,610 420,618 445,640 485,632 510,650 557,678 572,652 610,668 638,677 660,650 682,612 703,603 730,618 775,607 800,625 840,635 920,638 960,630 990,620 1040,628 1120,620 1150,635 1172,650 1195,640 1214,675 1245,658 1275,668",
  "10,668 35,640 65,648 110,680 130,728 145,705 175,690 190,670 215,680 260,692 320,700 345,700 365,670 410,662 460,660 490,678 535,660 580,662 605,682 630,665 690,668 720,688 800,712 825,708 850,728 910,738 940,750 975,742 1010,750 1060,745 1115,752");
const bars = [];
for (let x = 512; x <= 1308; x += 3.45) bars.push(Math.round(x));
bars.forEach(x => {
  const base = at(vol, x), h = Math.round(Math.max(2, base * (.5 + .5 * rnd())));
  const up = x < 551 && rnd() < .75 || x > 723 && x < 746 || rnd() < .42;
  g += rect(x, 510 - h, x < 534 && x > 524 ? 2 : 1.6, h, up ? "#9ff09f" : "#f59a9a");
});

/* Bollinger band, averages and candles */
const upper = series(240,
  "0,608 50,610 80,590 110,545 150,515 175,503 195,500 215,503 230,512 260,526 310,523 340,540 370,555 420,580 500,578 560,590 620,622 650,635 690,600 750,588 820,585 860,600 940,612 1080,612 1170,620 1215,605 1275,608",
  "0,608 30,620 70,635 130,628 230,630 290,665 350,668 400,650 490,640 600,650 700,655 760,655 850,655 920,680 1000,705 1050,730 1115,738");
const lower = series(240,
  "0,672 60,678 120,688 180,685 215,665 250,620 300,612 350,630 380,622 420,635 470,665 530,678 600,688 660,685 690,696 720,700 750,698 780,690 850,648 930,652 1000,638 1130,632 1190,660 1250,680 1275,688",
  "0,688 60,680 100,690 150,718 220,722 300,710 380,712 470,715 520,700 560,684 700,685 760,705 800,720 860,735 930,758 1000,763 1060,755 1115,755");
const slow = series(240,
  "0,620 60,625 110,608 180,590 250,588 360,594 460,605 560,628 640,640 740,635 800,630 900,634 1150,628 1275,645",
  "0,645 80,653 200,672 350,680 430,672 560,668 700,670 800,685 900,703 1000,720 1115,731");
const mid = series(240,
  "0,628 60,630 110,605 160,587 230,584 360,595 460,612 560,636 640,650 740,632 800,625 900,635 1150,630 1275,652",
  "0,652 80,655 200,680 350,686 430,675 560,669 700,672 800,691 900,713 1000,732 1115,740");
const fast = series(240,
  "0,636 50,635 100,600 140,567 195,562 240,580 310,598 350,592 440,610 500,635 560,655 600,660 640,668 680,645 730,622 780,618 840,630 900,635 980,632 1080,628 1150,630 1200,645 1275,660",
  "0,660 60,650 110,670 150,688 200,685 270,685 340,693 380,680 440,668 560,668 690,668 780,695 850,710 940,740 1010,745 1115,748");
g += `<polygon points="${pts(upper.concat([...lower].reverse()))}" fill="#9a98f0" fill-opacity=".4"/>`;
g += line(upper, "#a8a8f0") + line(lower, "#a8a8f0");
let prev = at(price, 511);
bars.forEach(x => {
  const early = x < 590 ? 2.6 : 1;
  const c = at(price, x) + (rnd() - .5) * 2.4, o = prev;
  const top = Math.round(Math.min(o, c)), h = Math.round(Math.max(2, Math.abs(o - c) + early));
  const hi = top - rnd() * 3 * early, lo = top + h + rnd() * 2.5 * early;
  g += seg(x + .5, hi.toFixed(1), x + .5, lo.toFixed(1), "#000");
  g += `<rect x="${x - .5}" y="${top + .5}" width="2" height="${h}" fill="${c < o ? "#50c058" : "#d04040"}" stroke="#000" stroke-width=".8"/>`;
  prev = c;
});
g += line(slow, "#28a040") + line(mid, "#204880") + line(fast, "#b83040");
g += seg(547, 408.5, 981, 485.5, "#2424d0");
g += seg(511, 328.5, 1324, 328.5, "#1818a8") + seg(511, 492.5, 1324, 492.5, "#1818a8");
g += text(1327, 332, "66.5", "#2a2ae0") + text(1327, 496, "24.6", "#2a2ae0") + text(1327, 514, "20");
[[531,"#28a040","EMA (40): 26.75"],[648,"#9a98f0","Bollinger (20, 2): 24.6 - 26.04"],[835,"#f08c8c","Vol: 0.301M"]].forEach(([x, c, t]) => {
  g += `<rect x="${x + .5}" y="290.500" width="7" height="7" fill="${c}" stroke="#000"/>` + text(x + 12, 298, t);
});
g += text(730, 312, "UTTARABANK", "#2020d0", "strong mid");

/* oscillators */
function oscillator(id, s, hi, lo, hiText, loText) {
  const area = y => `${s[0][0]},${y} ${pts(s)} ${s[s.length - 1][0]},${y}`;
  g += `<clipPath id="${id}a"><rect x="511" y="${hi - 20}" width="813" height="20"/></clipPath><clipPath id="${id}b"><rect x="511" y="${lo}" width="813" height="20"/></clipPath>`;
  g += `<polygon points="${area(hi)}" fill="#ff6060" clip-path="url(#${id}a)"/><polygon points="${area(lo)}" fill="#6460f0" clip-path="url(#${id}b)"/>`;
  g += seg(511, hi, 1324, hi, "#e06060") + seg(511, lo, 1324, lo, "#5858d8") + line(s, "#802070", 1.1);
  g += text(1327, hi + 4, hiText, "#f06868") + text(1327, lo + 4, loText, "#6868f0");
}
const macd = series(505,
  "0,106 50,104 90,95 130,86 180,88 280,98 370,103 470,111 560,114 640,110 720,97 840,100 1000,102 1150,100 1230,106 1275,108",
  "0,108 80,104 130,111 180,111 230,106 330,108 410,98 560,99 720,102 840,108 940,112 1115,107");
g += `<path d="M511 539.500H1309" stroke="#187028" stroke-width="1.500" stroke-dasharray="1.700 1.700"/>`;
[[527,560,4],[583,615,2],[704,750,4],[835,880,2],[946,965,2],[997,1032,2],[1050,1082,3],[1263,1309,3]].forEach(([a, b, h]) => {
  g += `<path d="M${a} 538.500H${b}" stroke="#187028" stroke-width="${h}" stroke-dasharray="2 1.500"/>`;
});
g += line(macd.map(([x, y]) => [x + 7, y]).filter(p => p[0] < 1309), "#e050e0") + line(macd, "#3018c0", 1.4);
g += text(1327, 529, "5") + text(1327, 556, "-5");
oscillator("st", series(505,
  "0,250 15,260 45,238 57,188 70,188 80,195 90,188 110,188 120,202 130,196 160,235 182,225 200,260 210,266 225,266 235,258 245,266 300,266 320,240 338,200 348,215 360,265 370,250 380,266 440,266 460,255 500,266 558,266 568,188 580,192 590,207 610,210 632,232 640,188 705,188 735,215 748,207 768,212 790,258 800,266 838,262 852,245 868,262 880,266 903,238 915,266 932,266 957,195 965,188 988,188 998,217 1018,212 1028,232 1045,220 1062,233 1080,190 1090,230 1102,248 1122,190 1135,250 1145,266 1172,266 1185,233 1195,257 1208,252 1216,266 1228,240 1260,240 1275,222",
  "0,220 20,188 50,190 70,208 90,255 98,266 125,266 135,240 175,225 190,188 200,190 210,203 232,200 240,213 262,218 272,250 283,235 300,257 320,266 335,260 350,200 357,188 377,188 388,205 407,188 420,212 438,228 460,200 480,245 492,266 502,248 512,258 545,232 565,243 575,232 595,262 607,266 628,190 640,230 650,205 668,228 680,204 700,245 710,266 743,266 752,258 762,266 805,266 815,236 830,257 845,262 850,266 868,266 878,246 898,262 910,266 920,217 930,247 952,242 962,190 992,225 1010,195 1025,188 1035,197 1045,190 1057,208 1085,230 1105,232 1117,238"),
  572.5, 589.5, "80", "20");
oscillator("rs", series(505,
  "0,362 45,358 60,342 70,344 80,339 100,334 115,340 130,337 160,351 180,346 225,356 310,358 338,351 360,358 440,366 500,370 558,376 568,360 630,368 650,355 690,341 705,340 735,349 760,348 820,355 852,354 920,358 985,347 1060,352 1080,346 1122,345 1140,356 1170,368 1185,358 1215,373 1230,362 1275,363",
  "0,363 35,350 60,350 90,364 105,366 127,376 137,366 175,360 190,351 280,360 340,360 370,346 408,341 430,349 460,344 490,355 545,350 607,358 628,350 680,351 720,360 800,368 815,362 850,370 910,373 920,367 1000,368 1045,361 1117,366"),
  617.5, 628.5, "70", "30");
oscillator("wr", series(505,
  "0,490 15,500 45,488 55,450 75,458 97,447 120,462 132,450 162,478 182,463 222,487 232,480 250,487 320,491 340,488 360,517 370,512 390,517 440,516 480,514 558,516 568,497 590,502 618,508 632,517 650,490 665,478 682,447 692,450 705,442 725,462 735,465 748,456 820,470 832,480 852,472 870,480 903,475 932,488 950,504 975,502 985,488 1000,495 1060,496 1080,458 1098,475 1122,462 1145,500 1172,516 1185,497 1195,516 1216,516 1225,498 1275,500",
  "0,500 15,490 32,473 55,475 95,513 127,516 135,497 180,480 185,467 198,463 215,475 230,472 265,488 340,490 375,450 390,457 408,446 425,465 442,472 460,448 492,487 510,476 545,463 575,473 585,472 600,490 612,488 628,467 640,490 650,482 662,493 680,480 710,516 742,516 752,509 760,516 805,513 815,500 828,516 910,516 920,508 935,515 1010,514 1022,505 1035,508 1045,502 1060,508 1117,513"),
  656.5, 673.5, "-20", "-80");
oscillator("mf", series(505,
  "0,600 30,605 45,607 68,590 100,587 130,582 150,588 195,590 215,603 235,608 265,630 278,636 310,625 330,626 340,618 420,614 440,620 460,616 485,630 560,634 575,618 632,622 665,590 705,573 725,586 780,587 810,597 830,610 850,622 885,614 903,627 935,623 965,605 985,597 1005,608 1020,603 1040,610 1070,604 1080,597 1105,603 1122,598 1145,607 1170,612 1185,606 1215,615 1240,612 1260,618 1275,616",
  "0,620 30,604 85,600 105,605 130,602 140,604 150,598 180,619 190,608 205,610 235,601 290,600 315,606 330,602 345,613 370,600 395,600 408,586 420,598 440,595 460,588 500,600 545,600 555,611 590,605 607,623 628,599 680,604 750,611 775,628 795,637 815,628 830,637 870,636 910,630 930,626 960,628 1010,624 1045,614 1065,623 1100,623 1117,630"),
  698.5, 715.5, "80", "20");

[511, 553, 595, 637, 679].forEach(y => { g += seg(511, y, 1324, y, "#000", 2); });
g += seg(511, 720.5, 1324, 720.5, "#000") + seg(1324.5, 288, 1324.5, 721, "#000");
[525.5, 567.5, 609.5, 651.5, 693.5].forEach(y => { g += seg(1320, y, 1324, y, "#555"); });
months.forEach(([x, t]) => { g += seg(x, 720, x, 723, "#000") + text(x, 734, t, "#222", t === "Jan 13" ? "strong mid" : "mid"); });
document.getElementById("plot").innerHTML = g;
```
